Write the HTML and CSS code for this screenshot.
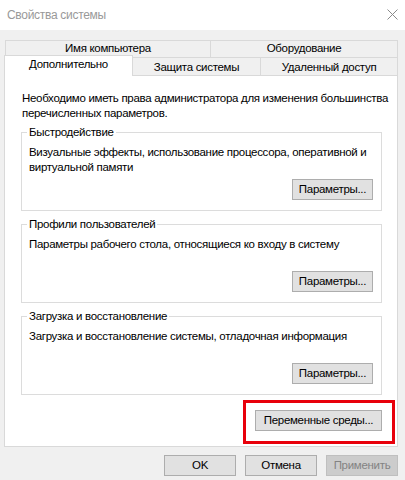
FILE: index.html
```html
<!DOCTYPE html>
<html lang="ru">
<head>
    <meta charset="utf-8">
    <title>Свойства системы</title>
    <link rel="stylesheet" href="styles.css">
</head>
<body>
    <div class="window">
        <div class="titlebar">
            <span class="title">Свойства системы</span>
            <svg class="close" width="11" height="11" viewBox="0 0 11 11">
                <path d="M0.5 0.5 L10.5 10.5 M10.5 0.5 L0.5 10.5" stroke="#8a8a8a" stroke-width="1" fill="none"/>
            </svg>
        </div>

        <div class="content">
            <div class="tabs">
                <div class="tab-row row-back">
                    <div class="tab tab-computer">Имя компьютера</div>
                    <div class="tab tab-fill">Оборудование</div>
                </div>
                <div class="tab-row row-front">
                    <div class="tab tab-active">Дополнительно</div>
                    <div class="tab tab-protect">Защита системы</div>
                    <div class="tab tab-fill">Удаленный доступ</div>
                </div>
            </div>

            <div class="panel">
                <p class="intro">Необходимо иметь права администратора для изменения большинства<br>перечисленных параметров.</p>

                <fieldset class="group">
                    <legend>Быстродействие</legend>
                    <div class="group-body">
                        <p>Визуальные эффекты, использование процессора, оперативной и<br>виртуальной памяти</p>
                        <div class="group-actions">
                            <button class="btn btn-params">Параметры...</button>
                        </div>
                    </div>
                </fieldset>

                <fieldset class="group">
                    <legend>Профили пользователей</legend>
                    <div class="group-body">
                        <p>Параметры рабочего стола, относящиеся ко входу в систему</p>
                        <div class="group-actions">
                            <button class="btn btn-params">Параметры...</button>
                        </div>
                    </div>
                </fieldset>

                <fieldset class="group">
                    <legend>Загрузка и восстановление</legend>
                    <div class="group-body">
                        <p>Загрузка и восстановление системы, отладочная информация</p>
                        <div class="group-actions">
                            <button class="btn btn-params">Параметры...</button>
                        </div>
                    </div>
                </fieldset>

                <div class="env-row">
                    <div class="highlight">
                        <button class="btn btn-env">Переменные среды...</button>
                    </div>
                </div>
            </div>

            <div class="dialog-buttons">
                <button class="btn btn-dialog">OK</button>
                <button class="btn btn-dialog">Отмена</button>
                <button class="btn btn-dialog btn-disabled">Применить</button>
            </div>
        </div>
    </div>
</body>
</html>
```

FILE: styles.css
```css
* {
    box-sizing: border-box;
}
p {
    margin: 0;
}
body {
    margin: 0;
    font-family: "Liberation Sans", Arial, sans-serif;
    font-size: 11.5px;
    letter-spacing: -0.3px;
    color: #000;
}
.window {
    width: 405px;
    height: 480px;
    background-color: #f0f0f0;
    display: flex;
    flex-direction: column;
    overflow: hidden;
}
.titlebar {
    height: 30px;
    background-color: #fff;
    display: flex;
    align-items: center;
    justify-content: space-between;
    padding: 0 7px 0 7px;
}
.title {
    color: #999;
    font-size: 12px;
}
.close {
    display: block;
    margin-top: -1px;
}

.content {
    padding: 10px 7px 0 4px;
}

/* tabs */
.tab-row {
    display: flex;
}
.tab {
    border: 1px solid #d9d9d9;
    border-bottom: none;
    background-color: #f0f0f0;
    text-align: center;
    line-height: 15px;
    white-space: nowrap;
}
.row-back {
    height: 17px;
    padding-left: 1px;
}
.tab-computer {
    width: 206px;
}
.tab-fill {
    flex: 1;
    border-left: none;
}
.row-front {
    height: 18px;
}
.row-front .tab {
    padding-top: 2px;
}
.row-front .tab-active {
    width: 129px;
    margin: -2px 0 -1px 0;
    padding-top: 1px;
    background-color: #fff;
    position: relative;
    z-index: 1;
}
.tab-protect {
    width: 128px;
    border-left: none;
}

/* panel */
.panel {
    background-color: #fff;
    border: 1px solid #d9d9d9;
    padding: 15px 15px 2px 16px;
}
.intro {
    line-height: 15px;
    padding-left: 1px;
    margin-bottom: 4px;
    white-space: nowrap;
}
.group {
    margin: 0 0 6px 0;
    padding: 0;
    border: 1px solid #dcdcdc;
    min-width: 0;
}
.group legend {
    margin-left: 5px;
    padding: 0 2px;
    line-height: 15px;
}
.group-body {
    height: 70px;
    padding: 5px 8px 10px 7px;
    display: flex;
    flex-direction: column;
    line-height: 15px;
    white-space: nowrap;
}
.group-actions {
    margin-top: auto;
    display: flex;
    justify-content: flex-end;
}

.btn {
    font-family: "Liberation Sans", Arial, sans-serif;
    font-size: 11.5px;
    letter-spacing: -0.3px;
    color: #000;
    background-color: #e1e1e1;
    border: 1px solid #adadad;
    height: 21px;
    padding: 0;
    line-height: 17px;
}
.btn-params {
    width: 81px;
}
.env-row {
    display: flex;
    justify-content: flex-end;
    margin-top: -1px;
}
.highlight {
    border: 3px solid #e8000b;
    padding: 7px 10px 10px 9px;
    margin-right: -13px;
}
.btn-env {
    width: 127px;
    display: block;
}

.dialog-buttons {
    display: flex;
    justify-content: flex-end;
    column-gap: 9px;
    margin-top: 8px;
}
.btn-dialog {
    width: 72px;
}
.btn-disabled {
    background-color: #cccccc;
    border-color: #bfbfbf;
    color: #838383;
}
```
